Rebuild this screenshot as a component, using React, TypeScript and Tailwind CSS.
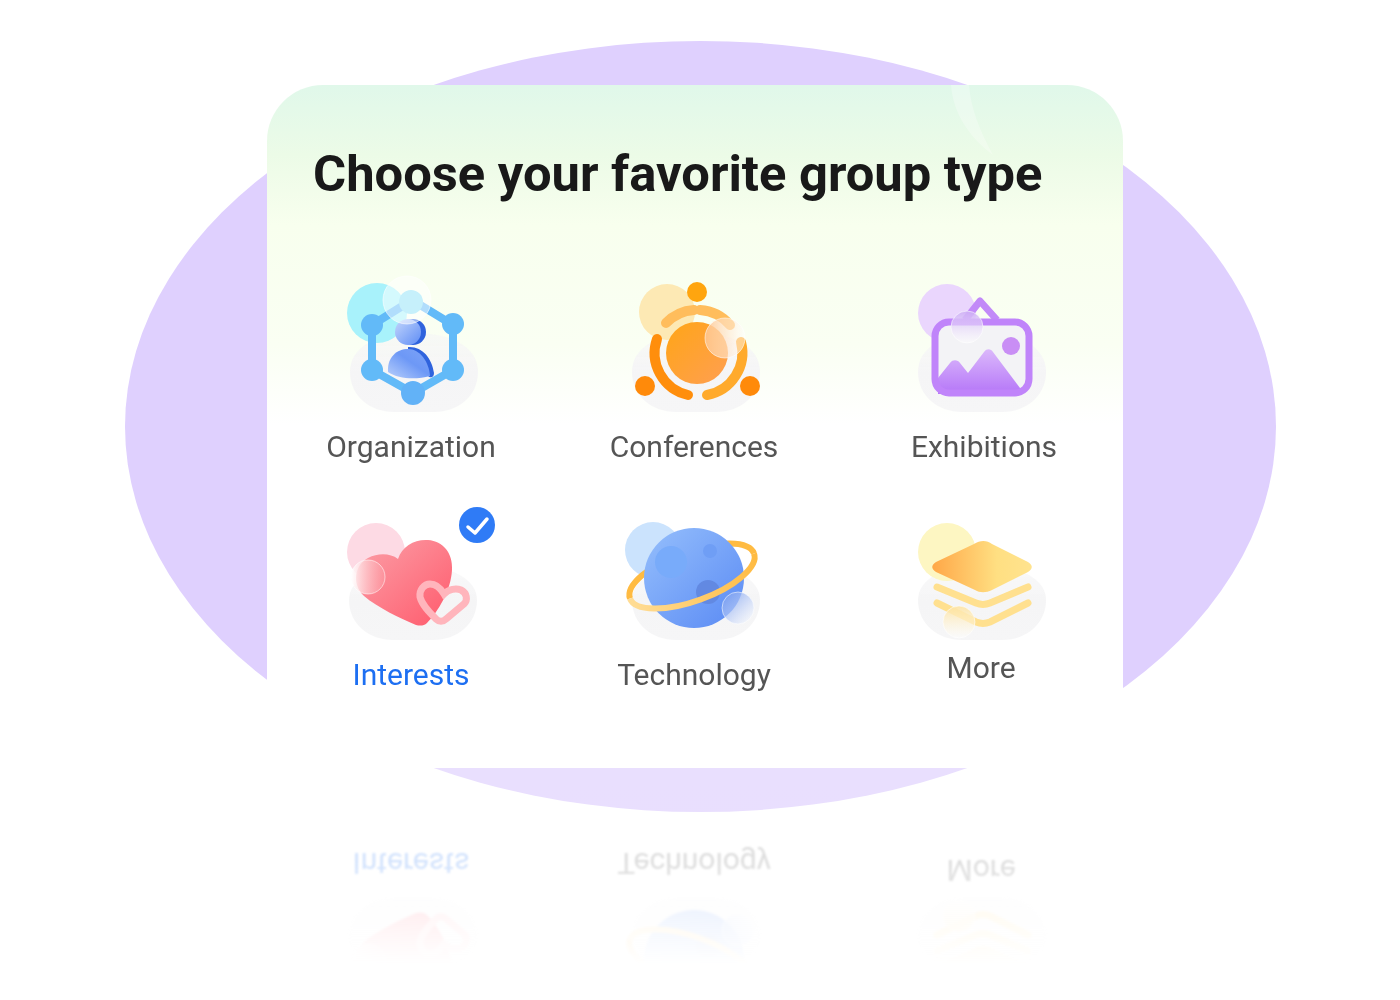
import type { ReactNode } from "react";

function Blob({ x, top }: { x: number; top: number }) {
  const b = top === 333 ? 412 : 640;
  return (
    <>
      <defs>
        <linearGradient id="blobFade" x1="0" y1="0" x2="0" y2="1">
          <stop offset="0" stopColor="#f5f5f6" stopOpacity="0.55" />
          <stop offset="0.5" stopColor="#f5f5f6" />
          <stop offset="1" stopColor="#f6f6f7" />
        </linearGradient>
      </defs>
      <path
        d={`M${x} ${b - 40} C${x} ${top + 14} ${x + 26} ${top} ${x + 64} ${top} C${x + 102} ${top} ${x + 128} ${top + 14} ${x + 128} ${b - 40} C${x + 128} ${b - 16} ${x + 108} ${b} ${x + 84} ${b} L${x + 44} ${b} C${x + 20} ${b} ${x} ${b - 16} ${x} ${b - 40}Z`}
        fill="url(#blobFade)"
      />
    </>
  );
}

function Glass({ cx, cy, r, id, from, to, angle }: { cx: number; cy: number; r: number; id: string; from: string; to: string; angle: [number, number, number, number] }) {
  return (
    <>
      <defs>
        <linearGradient id={id} x1={angle[0]} y1={angle[1]} x2={angle[2]} y2={angle[3]}>
          <stop offset="0" stopColor={from} stopOpacity="0.9" />
          <stop offset="1" stopColor={to} stopOpacity="0.45" />
        </linearGradient>
      </defs>
      <circle cx={cx} cy={cy} r={r} fill={`url(#${id})`} stroke="#ffffff" strokeOpacity="0.55" strokeWidth="1" />
    </>
  );
}

function OrganizationIcon() {
  return (
    <svg viewBox="323 270 180 150" className="h-[150px] w-[180px] blur-[0.4px]">
      <defs>
        <linearGradient id="orgHead" x1="0" y1="0" x2="1" y2="1">
          <stop offset="0" stopColor="#c3d6fc" />
          <stop offset="1" stopColor="#5f8df5" />
        </linearGradient>
        <linearGradient id="orgBody" x1="0" y1="1" x2="1" y2="0">
          <stop offset="0" stopColor="#b9d0fb" />
          <stop offset="0.55" stopColor="#6d98f6" />
          <stop offset="1" stopColor="#7ea4f8" />
        </linearGradient>
      </defs>
      <Blob x={350} top={333} />
      <circle cx="377" cy="313" r="30" fill="#a8f2fb" />
      <path d="M372 325 L412 300 L453 325 L453 370 L413 393 L372 370Z" fill="none" stroke="#62baf8" strokeWidth="8" strokeLinejoin="round" />
      <circle cx="372" cy="325" r="11" fill="#62baf8" />
      <circle cx="453" cy="324" r="11" fill="#62baf8" />
      <circle cx="453" cy="370" r="11" fill="#62baf8" />
      <circle cx="372" cy="370" r="11" fill="#62baf8" />
      <circle cx="413" cy="393" r="12" fill="#62b2f7" />
      <circle cx="413" cy="332" r="13" fill="#2f63dd" />
      <circle cx="408" cy="332" r="13" fill="url(#orgHead)" />
      <path d="M408 347 C422 346 432 358 434 373 C434 378 430 378 428 376 L408 360Z" fill="#2f63dd" />
      <path d="M388 372 C387 357 397 349 408 349 C420 349 429 362 430 376 C416 380 398 379 388 372Z" fill="url(#orgBody)" />
      <circle cx="407" cy="300" r="24" fill="#ffffff" fillOpacity="0.5" stroke="#ffffff" strokeOpacity="0.6" />
      <circle cx="411" cy="302" r="12" fill="#c6f0fb" />
    </svg>
  );
}

function ConferencesIcon() {
  return (
    <svg viewBox="606 270 180 150" className="h-[150px] w-[180px] blur-[0.4px]">
      <defs>
        <linearGradient id="confCore" x1="0" y1="0" x2="1" y2="1">
          <stop offset="0" stopColor="#ffa516" />
          <stop offset="1" stopColor="#ff9f52" />
        </linearGradient>
      </defs>
      <Blob x={632} top={333} />
      <circle cx="667" cy="312" r="28" fill="#fde9b4" />
      <circle cx="697" cy="292" r="10" fill="#ffa50f" />
      <circle cx="645" cy="386" r="10" fill="#ff8a0a" />
      <circle cx="750" cy="386" r="10" fill="#ff8a0a" />
      <circle cx="697" cy="353" r="31" fill="url(#confCore)" />
      <path d="M666 323 A43 43 0 0 1 694 310 M700 310 A43 43 0 0 1 730 325" fill="none" stroke="#ffbd5c" strokeWidth="10" strokeLinecap="round" />
      <path d="M657 339 A43 43 0 0 0 688 395" fill="none" stroke="#ff8e0c" strokeWidth="10" strokeLinecap="round" />
      <path d="M741 342 A43 43 0 0 1 707 395" fill="none" stroke="#ffaa2c" strokeWidth="10" strokeLinecap="round" />
      <Glass cx={725} cy={338} r={20} id="confGlass" from="#ffc48c" to="#ffffff" angle={[0, 0, 1, 0]} />
    </svg>
  );
}

function ExhibitionsIcon() {
  return (
    <svg viewBox="891 270 180 150" className="h-[150px] w-[180px] blur-[0.4px]">
      <defs>
        <linearGradient id="exhHill" x1="0" y1="0" x2="0" y2="1">
          <stop offset="0" stopColor="#dbb8fb" />
          <stop offset="1" stopColor="#b576f8" />
        </linearGradient>
      </defs>
      <Blob x={918} top={333} />
      <circle cx="947" cy="313" r="29" fill="#ead6fd" />
      <path d="M965 320 L980 301 L997 320" fill="none" stroke="#c28af8" strokeWidth="7" strokeLinejoin="round" />
      <rect x="935" y="322" width="94" height="71" rx="14" fill="#f3f3f6" />
      <path d="M938 378 L950 363 C953 359 958 360 960 363 L968 373 L984 352 C987 348 991 349 993 352 L1020 388 L1020 394 L938 394Z" fill="url(#exhHill)" />
      <circle cx="1011" cy="346" r="9" fill="#c98ef5" />
      <rect x="935" y="322" width="94" height="71" rx="14" fill="none" stroke="#c084fa" strokeWidth="7" />
      <Glass cx={967} cy={327} r={16} id="exhGlass" from="#cdaef5" to="#ffffff" angle={[0, 0, 0, 1]} />
    </svg>
  );
}

function InterestsIcon() {
  return (
    <svg viewBox="323 505 180 140" className="h-[140px] w-[180px] blur-[0.4px]">
      <defs>
        <linearGradient id="heartFill" x1="0" y1="0" x2="1" y2="1">
          <stop offset="0" stopColor="#fba0a8" />
          <stop offset="1" stopColor="#ff5a6c" />
        </linearGradient>
      </defs>
      <Blob x={349} top={565} />
      <circle cx="376" cy="552" r="29" fill="#fddae4" />
      <path
        d="M398 559 C402 546 415 539 428 540 C443 541 453 553 452 570 C451 590 438 612 427 623 C424 626 420 626 416 625 C400 618 378 608 364 596 C352 585 354 565 368 558 C378 553 390 553 398 559Z"
        fill="url(#heartFill)"
      />
      <path
        d="M420 597 C419 590 424 584 430 584 C436 584 441 589 444 594 C449 589 456 588 461 590 C467 593 468 600 464 604 L446 619 C443 622 439 622 436 619 C429 612 422 605 420 597Z"
        fill="none"
        stroke="#ffb5bc"
        strokeWidth="7"
      />
      <Glass cx={368} cy={577} r={17} id="heartGlass" from="#ffffff" to="#fc9ea6" angle={[0, 0, 1, 0]} />
      <circle cx="477" cy="525" r="18" fill="#2f7bf6" />
      <path d="M468 527 L475 533 L487 519" fill="none" stroke="#ffffff" strokeWidth="3.5" strokeLinecap="round" strokeLinejoin="round" />
    </svg>
  );
}

function TechnologyIcon() {
  return (
    <svg viewBox="606 505 180 140" className="h-[140px] w-[180px] blur-[0.4px]">
      <defs>
        <linearGradient id="planetFill" x1="0" y1="0" x2="1" y2="1">
          <stop offset="0" stopColor="#95bffc" />
          <stop offset="1" stopColor="#5a8af4" />
        </linearGradient>
        <linearGradient id="ringFill" x1="0" y1="0" x2="1" y2="0">
          <stop offset="0" stopColor="#ffdc94" />
          <stop offset="1" stopColor="#ffbb42" />
        </linearGradient>
      </defs>
      <Blob x={632} top={565} />
      <circle cx="653" cy="550" r="28" fill="#cbe3fd" />
      <g transform="translate(692 576) rotate(-20)">
        <path d="M-66 0 A66 25 0 0 1 66 0" fill="none" stroke="#ffbb42" strokeWidth="6" />
      </g>
      <circle cx="694" cy="578" r="50" fill="url(#planetFill)" />
      <circle cx="671" cy="562" r="16" fill="#78abfa" />
      <circle cx="710" cy="551" r="7" fill="#6f9ef5" />
      <circle cx="708" cy="592" r="12" fill="#6289e2" />
      <g transform="translate(692 576) rotate(-20)">
        <path d="M-66 0 A66 25 0 0 0 66 0" fill="none" stroke="url(#ringFill)" strokeWidth="6" />
      </g>
      <Glass cx={738} cy={608} r={16} id="planetGlass" from="#6f96ee" to="#ffffff" angle={[0, 0, 1, 1]} />
    </svg>
  );
}

function MoreIcon() {
  return (
    <svg viewBox="891 505 180 140" className="h-[140px] w-[180px] blur-[0.4px]">
      <defs>
        <linearGradient id="stackTop" x1="0" y1="0" x2="1" y2="0">
          <stop offset="0" stopColor="#ffa747" />
          <stop offset="0.65" stopColor="#ffdf82" />
          <stop offset="1" stopColor="#ffe38e" />
        </linearGradient>
      </defs>
      <Blob x={918} top={565} />
      <circle cx="947" cy="552" r="29" fill="#fdf6c2" />
      <path d="M974 544 C980 540 987 540 992 544 L1028 562 C1033 565 1033 569 1028 572 L992 590 C986 593 980 593 975 590 L936 572 C931 569 931 565 936 562Z" fill="url(#stackTop)" />
      <path d="M937 587 L976 603 C981 605 985 605 990 603 L1028 587" fill="none" stroke="#ffe08f" strokeWidth="7" strokeLinecap="round" />
      <path d="M937 603 L976 622 C981 624 985 624 990 622 L1028 603" fill="none" stroke="#ffe08f" strokeWidth="7" strokeLinecap="round" />
      <Glass cx={959} cy={622} r={16} id="stackGlass" from="#fde3a0" to="#ffffff" angle={[0, 0, 0, 1]} />
    </svg>
  );
}

function Cell({ icon, label, labelClass }: { icon: ReactNode; label: string; labelClass: string }) {
  return (
    <div className="flex flex-col items-center">
      {icon}
      <span className={`text-[30px] leading-[36px] blur-[0.3px] ${labelClass}`}>{label}</span>
    </div>
  );
}

const gridClass = "grid grid-cols-[283px_285px_180px] items-start justify-items-start";

function BottomRow() {
  return (
    <>
      <Cell icon={<InterestsIcon />} label="Interests" labelClass="mt-[12px] mr-[4px] text-[#1d6ff2]" />
      <Cell icon={<TechnologyIcon />} label="Technology" labelClass="mt-[12px] mr-[4px] text-[#555555]" />
      <Cell icon={<MoreIcon />} label="More" labelClass="mt-[5px] text-[#555555]" />
    </>
  );
}

export default function App() {
  return (
    <div className="relative h-[1000px] w-[1400px] overflow-hidden bg-white font-['Roboto',sans-serif]">
      <div className="absolute left-[125px] top-[41px] h-[771px] w-[1151px] rounded-[50%] bg-[#dfd0fe]" />

      <div className="relative ml-[267px] mt-[85px] h-[683px] w-[856px] overflow-hidden rounded-[56px] bg-[linear-gradient(to_bottom,#e0f8ea_0px,#ecfbe7_70px,#f8ffee_140px,#fafff3_260px,#ffffff_340px)]">
        <svg viewBox="0 0 60 80" className="absolute left-[680px] top-0 h-[80px] w-[60px]">
          <path d="M4 0 C6 28 22 52 46 70 C32 44 24 24 22 0Z" fill="#ffffff" fillOpacity="0.28" />
        </svg>

        <h1 className="pl-[46px] pt-[57px] text-[50.7px] font-bold leading-[64px] text-[#191919] blur-[0.3px]">
          Choose your favorite group type
        </h1>

        <div className={`${gridClass} ml-[56px] mt-[64px] gap-y-[40px]`}>
          <Cell icon={<OrganizationIcon />} label="Organization" labelClass="mt-[9px] mr-[4px] text-[#555555]" />
          <Cell icon={<ConferencesIcon />} label="Conferences" labelClass="mt-[9px] mr-[4px] text-[#555555]" />
          <Cell icon={<ExhibitionsIcon />} label="Exhibitions" labelClass="mt-[9px] ml-[6px] text-[#555555]" />
          <BottomRow />
        </div>
      </div>

      <div className="relative ml-[267px] h-[232px] w-[856px] overflow-hidden rounded-[56px] bg-[linear-gradient(to_bottom,rgba(255,255,255,0.32),rgba(255,255,255,0.28))]">
        <div className="h-full pt-[77px] opacity-20 blur-[1px] [mask-image:linear-gradient(to_bottom,black_40%,transparent_85%)]">
          <div className={`${gridClass} ml-[56px] -scale-y-100`}>
            <BottomRow />
          </div>
        </div>
      </div>
    </div>
  );
}
